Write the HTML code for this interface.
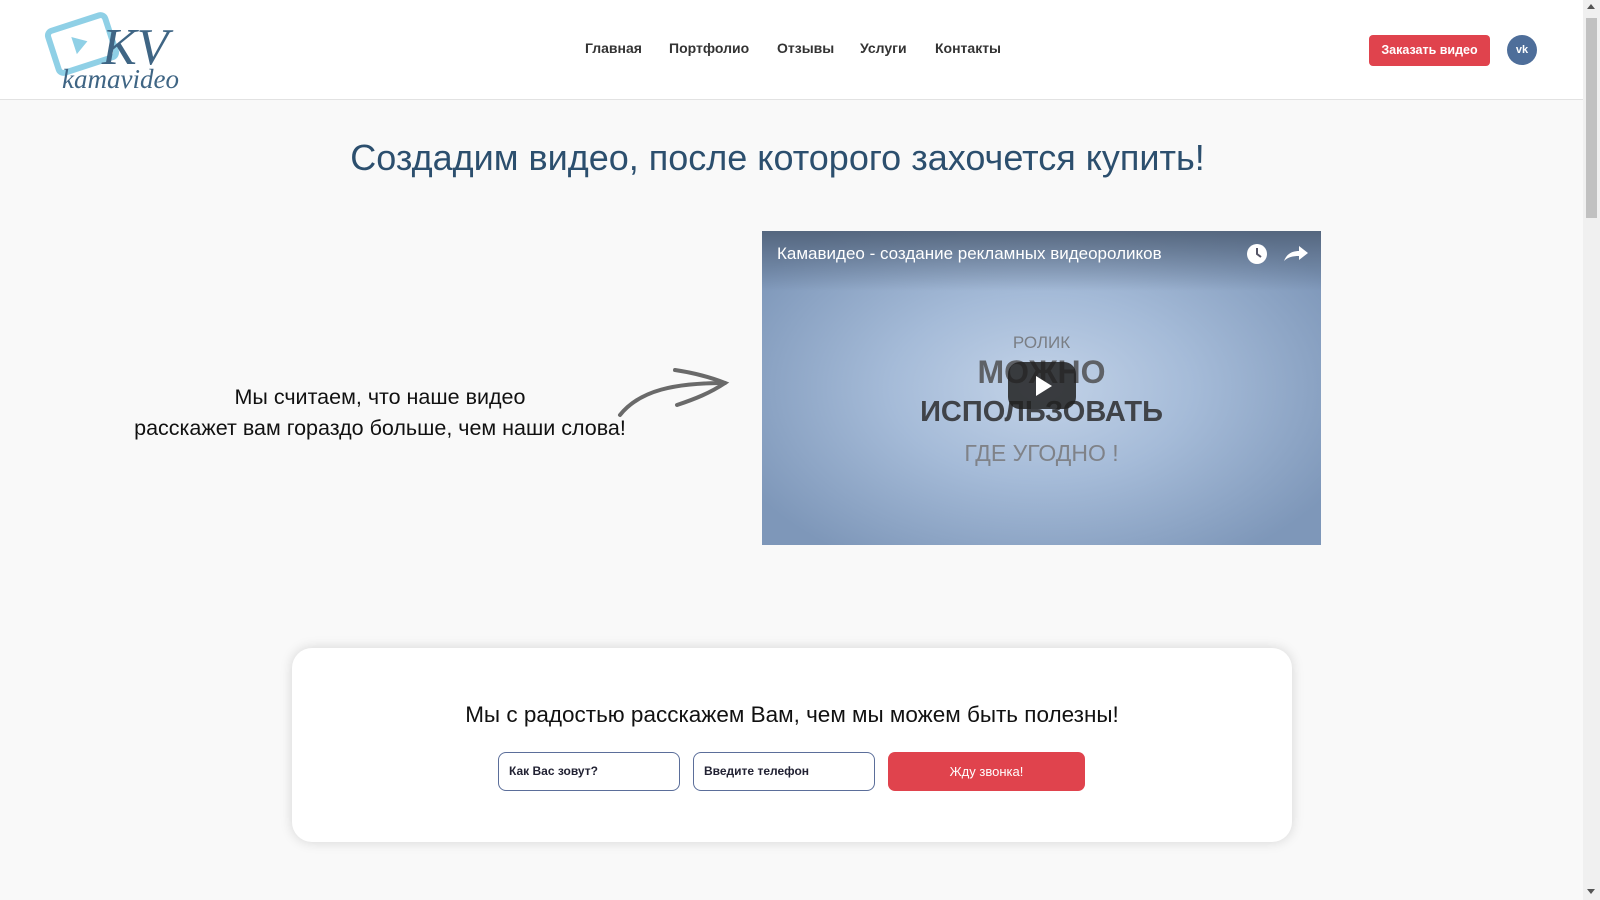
<!DOCTYPE html>
<html><head><meta charset="utf-8"><style>
*{margin:0;padding:0;box-sizing:border-box}
body{width:1600px;height:900px;overflow:hidden;background:#f9f9f9;font-family:"Liberation Sans",sans-serif;position:relative}
.hdr{position:absolute;left:0;top:0;width:1583px;height:100px;background:#fff;border-bottom:1px solid #e2e2e2}
.nav a{position:absolute;top:40px;font-size:14px;font-weight:bold;color:#333;text-decoration:none}
.btn{position:absolute;left:1369px;top:35px;width:121px;height:31px;background:#e0434d;border-radius:4px;color:#fff;font-size:12.5px;font-weight:bold;text-align:center;line-height:31px}
.vk{position:absolute;left:1507px;top:35px;width:30px;height:30px;border-radius:50%;background:#4e6e9a;color:#fff;font-size:11px;font-weight:bold;text-align:center;line-height:30px}
.sb{position:absolute;left:1583px;top:0;width:17px;height:900px;background:#f0f0f0}
.thumb{position:absolute;left:1586px;top:18px;width:11px;height:200px;background:#c1c1c1}
h1{position:absolute;left:0;width:1555px;top:137px;text-align:center;font-size:36px;font-weight:normal;color:#2c4f6e;letter-spacing:0}
.lt{position:absolute;left:110px;width:540px;top:382px;text-align:center;font-size:21.5px;line-height:31px;color:#111}
.video{position:absolute;left:762px;top:231px;width:559px;height:314px;background:radial-gradient(ellipse 60% 65% at 50% 50%,#c3d3e8 0%,#a5bbd8 45%,#7e97b9 100%);overflow:hidden}
.vt{position:absolute;left:0;top:0;width:100%;height:60px;background:linear-gradient(#4a5a70cc,#0000)}
.vt span{position:absolute;left:15px;top:13px;color:#fff;font-size:17px}
.card{position:absolute;left:292px;top:648px;width:1000px;height:194px;background:#fff;border-radius:20px;box-shadow:0 0 12px rgba(0,0,0,.15)}
.card h2{position:absolute;left:0;width:100%;top:54px;text-align:center;font-weight:normal;font-size:22.5px;color:#111}
.in{position:absolute;top:104px;width:182px;height:39px;border:1px solid #5b6e9a;border-radius:8px;font-size:12px;font-weight:bold;color:#223;padding-left:10px;line-height:37px}
.go{position:absolute;left:596px;top:104px;width:197px;height:39px;background:#e0434d;border-radius:7px;color:#fff;font-size:13px;text-align:center;line-height:39px}
</style></head><body>
<div class="hdr">
<svg style="position:absolute;left:44px;top:6px" width="150" height="86" viewBox="0 0 150 86">
<g transform="rotate(-18 38 38)"><rect x="8" y="16" width="60" height="44" rx="5" fill="none" stroke="#8fd0e6" stroke-width="6"/><polygon points="30,28 30,46 44,37" fill="#8fd0e6"/></g>
<text x="58" y="58" font-family="Liberation Serif,serif" font-style="italic" font-size="52" fill="#3f6584">KV</text>
<text x="18" y="82" font-family="Liberation Serif,serif" font-style="italic" font-size="27" fill="#3f6584">kamavideo</text>
</svg>
<div class="nav"><a style="left:585px">Главная</a><a style="left:669px">Портфолио</a><a style="left:777px">Отзывы</a><a style="left:860px">Услуги</a><a style="left:935px">Контакты</a></div>
<div class="btn">Заказать видео</div>
<div class="vk">vk</div>
</div>
<h1>Создадим видео, после которого захочется купить!</h1>
<div class="lt">Мы считаем, что наше видео<br>расскажет вам гораздо больше, чем наши слова!</div>
<svg style="position:absolute;left:615px;top:365px" width="115" height="55" viewBox="0 0 115 55">
<path d="M5 50 C25 25 60 18 110 18" fill="none" stroke="#6a6a6a" stroke-width="4" stroke-linecap="round"/>
<path d="M60 5 C80 8 95 12 110 18 C95 28 80 34 62 40" fill="none" stroke="#6a6a6a" stroke-width="4" stroke-linecap="round"/>
</svg>
<div class="video">
<div class="vt"><span>Камавидео - создание рекламных видеороликов</span></div>
<svg style="position:absolute;left:483px;top:10px" width="64" height="26"><circle cx="12" cy="13" r="10" fill="#fff"/><path d="M12 7v6l4 3" stroke="#556" stroke-width="2" fill="none"/><path d="M39 20 C42 12 48 10 54 10 V5 L63 12 L54 19 V15 C48 15 43 16 39 20Z" fill="#fff"/></svg>
<div style="position:absolute;left:0;width:100%;top:102px;text-align:center;color:#7a7e84;font-size:17px">РОЛИК</div>
<div style="position:absolute;left:0;width:100%;top:123px;text-align:center;color:#5e6166;font-size:32px;font-weight:bold">МОЖНО</div>
<div style="position:absolute;left:0;width:100%;top:165px;text-align:center;color:#404348;font-size:29px;font-weight:bold">ИСПОЛЬЗОВАТЬ</div>
<div style="position:absolute;left:0;width:100%;top:209px;text-align:center;color:#7f8288;font-size:23px">ГДЕ УГОДНО !</div>
<div style="position:absolute;left:246px;top:131px;width:68px;height:47px;background:rgba(33,33,33,.85);border-radius:12px"></div>
<div style="position:absolute;left:274px;top:145px;width:0;height:0;border-left:16px solid #fff;border-top:10px solid transparent;border-bottom:10px solid transparent"></div>
</div>
<div class="card">
<h2>Мы с радостью расскажем Вам, чем мы можем быть полезны!</h2>
<div class="in" style="left:206px">Как Вас зовут?</div>
<div class="in" style="left:401px">Введите телефон</div>
<div class="go">Жду звонка!</div>
</div>
<div class="sb"></div><div class="thumb"></div>
<div style="position:absolute;left:1587px;top:4px;border-left:4px solid transparent;border-right:4px solid transparent;border-bottom:5px solid #555"></div>
<div style="position:absolute;left:1587px;top:889px;border-left:4px solid transparent;border-right:4px solid transparent;border-top:5px solid #555"></div>
</body></html>
